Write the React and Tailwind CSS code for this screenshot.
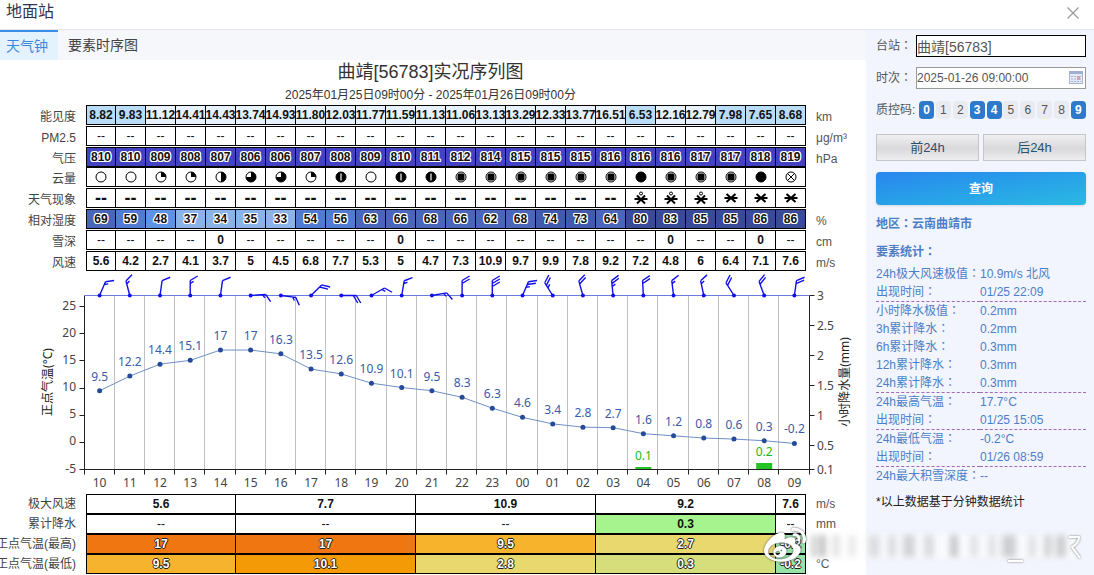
import { useState } from "react";
import clsx from "clsx";
import { FaWeibo } from "react-icons/fa";

const visibility = [
  "8.82", "9.83", "11.12", "14.41", "14.43", "13.74", "14.93", "11.80",
  "12.03", "11.77", "11.59", "11.13", "11.06", "13.13", "13.29", "12.33",
  "13.77", "16.51", "6.53", "12.16", "12.79", "7.98", "7.65", "8.68",
];
const pressure = [
  810, 810, 809, 808, 807, 806, 806, 807, 808, 809, 810, 811, 812, 814, 815,
  815, 815, 816, 816, 816, 817, 817, 818, 819,
];
const cloud = [
  "none", "none", "quarter", "quarter", "half", "three", "three", "quarter",
  "bar", "none", "bar", "bar", "most", "most", "most", "most", "most", "most",
  "full", "most", "most", "most", "full", "cross",
];
const humidity = [
  69, 59, 48, 37, 34, 35, 33, 54, 56, 63, 66, 68, 66, 62, 68, 74, 73, 64, 80,
  83, 85, 85, 86, 86,
];
const wind = [
  5.6, 4.2, 2.7, 4.1, 3.7, 5, 4.5, 6.8, 7.7, 5.3, 5, 4.7, 7.3, 10.9, 9.7, 9.9,
  7.8, 9.2, 7.2, 4.8, 6, 6.4, 7.1, 7.6,
];
const snow = wind.map((_, i) => ([4, 10, 19, 22].includes(i) ? "0" : "--"));
const pm25 = wind.map(() => "--");
const weather = wind.map((_, i) => (i < 18 ? "--" : i < 21 ? "sleet" : "snow"));

const hours = [
  "10", "11", "12", "13", "14", "15", "16", "17", "18", "19", "20", "21", "22",
  "23", "00", "01", "02", "03", "04", "05", "06", "07", "08", "09",
];
const temps = [
  9.5, 12.2, 14.4, 15.1, 17, 17, 16.3, 13.5, 12.6, 10.9, 10.1, 9.5, 8.3, 6.3,
  4.6, 3.4, 2.8, 2.7, 1.6, 1.2, 0.8, 0.6, 0.3, -0.2,
];
// [direction in degrees, full barbs, half barbs]
const barbs = [
  [23, 1, 1], [-15, 1, 1], [8, 1, 0], [0, 1, 1], [8, 1, 0], [86, 1, 1],
  [97, 1, 1], [45, 2, 0], [90, 2, 0], [60, 1, 1], [10, 1, 1], [80, 1, 1],
  [0, 2, 0], [0, 3, 0], [23, 2, 1], [-32, 2, 1], [-16, 2, 0], [-6, 2, 1],
  [-3, 2, 0], [-7, 1, 1], [-12, 1, 1], [-32, 2, 0], [-20, 2, 0], [8, 2, 0],
];

const whiteHalo =
  "[text-shadow:1px_0_#fff,-1px_0_#fff,0_1px_#fff,0_-1px_#fff,1px_1px_#fff,-1px_-1px_#fff,1px_-1px_#fff,-1px_1px_#fff]";
const blackHalo =
  "text-white [text-shadow:1px_0_#222,-1px_0_#222,0_1px_#222,0_-1px_#222]";

const humidityColor = (value) => {
  if (value >= 80) return "bg-[#384a98]";
  if (value >= 70) return "bg-[#405aad]";
  if (value >= 60) return "bg-[#4966ba]";
  if (value >= 50) return "bg-[#517bd0]";
  if (value >= 40) return "bg-[#5d93e4]";
  return "bg-[#8ab3ea]";
};

const CloudIcon = ({ type }) => (
  <svg width="12" height="12" viewBox="0 0 12 12">
    <circle cx="6" cy="6" r="5" fill="#fff" stroke="#000" />
    {type === "quarter" && <path d="M6 6V1a5 5 0 0 1 5 5z" />}
    {type === "half" && <path d="M6 1a5 5 0 0 1 0 10z" />}
    {type === "three" && <path d="M6 6V1a5 5 0 1 1-5 5z" />}
    {type === "bar" && (
      <>
        <circle cx="6" cy="6" r="5" />
        <path d="M6 2.5v7" stroke="#fff" strokeWidth="1.2" />
      </>
    )}
    {type === "most" && <rect x="2.5" y="2.5" width="7" height="7" rx="1.5" />}
    {type === "full" && <circle cx="6" cy="6" r="5" />}
    {type === "cross" && (
      <path d="M2.8 2.8l6.4 6.4M9.2 2.8L2.8 9.2" stroke="#000" />
    )}
  </svg>
);

const WeatherIcon = ({ type }) => {
  if (type === "--") return <span className="text-lg leading-none">--</span>;
  return (
    <svg width="14" height="14" viewBox="0 0 14 14" fill="none" stroke="#000">
      <path
        d={
          type === "sleet"
            ? "M0.5 8h13M3 4.5l8 8M11 4.5l-8 8"
            : "M0.5 7h13M2.5 3l9 8M11.5 3l-9 8"
        }
        strokeWidth="2"
      />
      {type === "sleet" && <circle cx="7" cy="2.5" r="1.5" />}
    </svg>
  );
};

const elementRows = [
  {
    label: "能见度",
    unit: "km",
    values: visibility,
    color: (v) => (v < 10 ? "bg-[#b9dcf8]" : "bg-[#e6f1fb]"),
    text: "font-bold",
  },
  { label: "PM2.5", unit: "μg/m³", values: pm25 },
  {
    label: "气压",
    unit: "hPa",
    values: pressure,
    color: () => "bg-[#4342c2]",
    text: clsx("font-bold", whiteHalo),
    tight: true,
  },
  {
    label: "云量",
    unit: "",
    values: cloud,
    render: (v) => <CloudIcon type={v} />,
  },
  {
    label: "天气现象",
    unit: "",
    values: weather,
    text: "font-bold",
    render: (v) => <WeatherIcon type={v} />,
  },
  {
    label: "相对湿度",
    unit: "%",
    values: humidity,
    color: humidityColor,
    text: clsx("font-bold", whiteHalo),
  },
  {
    label: "雪深",
    unit: "cm",
    values: snow,
    render: (v) => (v === "0" ? <b>{v}</b> : v),
  },
  { label: "风速", unit: "m/s", values: wind, text: "font-bold" },
];

const summaryRows = [
  {
    label: "极大风速",
    unit: "m/s",
    values: ["5.6", "7.7", "10.9", "9.2", "7.6"],
    colors: [],
    text: "",
  },
  {
    label: "累计降水",
    unit: "mm",
    values: ["--", "--", "--", "0.3", "--"],
    colors: ["", "", "", "bg-[#a5f48d]", ""],
    text: "",
  },
  {
    label: "正点气温(最高)",
    unit: "",
    values: ["17", "17", "9.5", "2.7", "-0.2"],
    colors: ["bg-[#f07612]", "bg-[#f07612]", "bg-[#f8b32d]", "bg-[#e8d86e]", "bg-[#96e3a8]"],
    text: blackHalo,
  },
  {
    label: "正点气温(最低)",
    unit: "°C",
    values: ["9.5", "10.1", "2.8", "0.3", "-0.2"],
    colors: ["bg-[#f6b42e]", "bg-[#f39a06]", "bg-[#e8d86e]", "bg-[#d6de7c]", "bg-[#96e3a8]"],
    text: blackHalo,
  },
];
const spans = [5, 6, 6, 6, 1];

const Columns = () => (
  <colgroup>
    <col className="w-[86px]" />
    {hours.map((h) => (
      <col key={h} />
    ))}
    <col className="w-[60px]" />
  </colgroup>
);

const ElementTable = () => (
  <table className="w-full table-fixed border-separate border-spacing-0 text-xs">
    <Columns />
    <tbody>
      {elementRows.map((row) => (
        <tr key={row.label}>
          <th scope="row" className="p-0 pr-[10px] text-right font-normal text-[#444]">
            <div className="flex h-5 items-center justify-end pt-[3px] whitespace-nowrap">
              {row.label}
            </div>
          </th>
          {row.values.map((value, i) => (
            <td key={i} className={clsx("p-0", !row.tight && "pb-px")}>
              <div
                className={clsx(
                  "flex h-5 items-center justify-center border-y border-r border-black text-[#111]",
                  i === 0 && "border-l",
                  row.color && row.color(value),
                  row.text
                )}
              >
                {row.render ? row.render(value) : value}
              </div>
            </td>
          ))}
          <td className="p-0 pl-[10px] text-[#555]">
            <div className="flex h-5 items-center pt-[3px]">{row.unit}</div>
          </td>
        </tr>
      ))}
    </tbody>
  </table>
);

const SummaryTable = () => (
  <table className="w-full table-fixed border-separate border-spacing-0 text-xs">
    <Columns />
    <tbody>
      {summaryRows.map((row) => (
        <tr key={row.label}>
          <th scope="row" className="p-0 pr-[10px] font-normal text-[#444]">
            <div className="flex h-5 items-center justify-end whitespace-nowrap">
              {row.label}
            </div>
          </th>
          {row.values.map((value, i) => (
            <td key={i} colSpan={spans[i]} className="p-0">
              <div
                className={clsx(
                  "flex h-5 items-center justify-center border-y border-r border-black",
                  i === 0 && "border-l",
                  value !== "--" && "font-bold",
                  row.colors[i],
                  row.text || "text-[#111]"
                )}
              >
                {value}
              </div>
            </td>
          ))}
          <td className="p-0 pl-[10px] text-[#555]">{row.unit}</td>
        </tr>
      ))}
    </tbody>
  </table>
);

const LEFT = 84.5;
const RIGHT = 809.5;
const TOP = 23.5;
const BOTTOM = 197.5;
const STEP = (RIGHT - LEFT) / 24;
const centerX = (i) => LEFT + STEP * (i + 0.5);
const tempY = (t) => BOTTOM - (t + 5) * 5.43;
const rainY = (r) => BOTTOM - (r - 0.1) * 60;

const WindBarb = ({ x, angle, full, half }) => {
  const lines = [];
  for (let n = 0; n < full + half; n++) {
    const y = -15 + n * 3;
    const k = n < full ? 1 : 0.45;
    lines.push(`M0 ${y}l${7.5 * k} ${-4.5 * k}`);
  }
  return (
    <g transform={`translate(${x} ${TOP})`}>
      <circle r="2" fill="#1010f0" />
      <path
        d={`M0 0V-15${lines.join("")}`}
        transform={`rotate(${angle})`}
        fill="none"
        stroke="#1010e8"
        strokeWidth="1.4"
      />
    </g>
  );
};

const Chart = () => (
  <svg
    viewBox="0 0 866 222"
    className="block w-full font-['Noto_Sans','Noto_Sans_CJK_SC',sans-serif] text-xs"
    role="img"
  >
    {hours.slice(1).map((h, i) => (
      <path
        key={h}
        d={`M${Math.round(LEFT + STEP * (i + 1)) - 0.5} ${TOP}V${BOTTOM}`}
        stroke="#bfc0c6"
      />
    ))}
    <path d={`M${LEFT} ${TOP}V${BOTTOM}H${RIGHT}V${TOP}`} fill="none" stroke="#222" />
    <path d={`M${LEFT} ${TOP}H${RIGHT}`} stroke="#6c7be0" />
    {[...hours, "end"].map((h, i) => (
      <path
        key={h}
        d={`M${Math.round(LEFT + STEP * i) - 0.5} ${BOTTOM}v5`}
        stroke="#222"
      />
    ))}
    {[-5, 0, 5, 10, 15, 20, 25].map((t) => (
      <g key={t}>
        <path d={`M${LEFT} ${Math.floor(tempY(t)) + 0.5}h-5`} stroke="#222" />
        <text x="76" y={tempY(t) + 3} textAnchor="end" fill="#444">
          {t}
        </text>
      </g>
    ))}
    {[0.1, 0.5, 1, 1.5, 2, 2.5, 3].map((r) => (
      <g key={r}>
        <path d={`M${RIGHT} ${Math.floor(rainY(r)) + 0.5}h5`} stroke="#222" />
        <text x="817" y={rainY(r) + 4} fill="#444">
          {r}
        </text>
      </g>
    ))}
    {hours.map((h, i) => (
      <text key={h} x={centerX(i)} y="215" textAnchor="middle" fill="#444">
        {h}
      </text>
    ))}
    <text transform="translate(52 110) rotate(-90)" textAnchor="middle" fill="#222">
      正点气温(°C)
    </text>
    <text transform="translate(849 110) rotate(-90)" textAnchor="middle" fill="#222">
      小时降水量(mm)
    </text>

    <rect x={centerX(18) - 8} y="195" width="16" height="2" fill="#22c322" />
    <rect x={centerX(22) - 8} y="191" width="16" height="6" fill="#22c322" />
    <g fill="#22b822" textAnchor="middle">
      <text x={centerX(18)} y="188">0.1</text>
      <text x={centerX(22)} y="184">0.2</text>
    </g>

    <polyline
      points={temps.map((t, i) => `${centerX(i)},${tempY(t)}`).join(" ")}
      fill="none"
      stroke="#6f8fc6"
    />
    {temps.map((t, i) => (
      <g key={i} fill="#264a9a">
        <circle cx={centerX(i)} cy={tempY(t)} r="2.5" />
        <text x={centerX(i)} y={tempY(t) - 10} textAnchor="middle" fill="#3a5ba6">
          {t}
        </text>
      </g>
    ))}
    {barbs.map(([angle, full, half], i) => (
      <WindBarb key={i} x={centerX(i)} angle={angle} full={full} half={half} />
    ))}
  </svg>
);

// full-width colon, centred in its box
const Colon = () => (
  <span className="font-['Noto_Sans_CJK_TC',sans-serif] leading-none">：</span>
);

const stats = [
  [
    ["24h极大风速极值", "10.9m/s 北风"],
    ["出现时间", "01/25 22:09"],
  ],
  [
    ["小时降水极值", "0.2mm"],
    ["3h累计降水", "0.2mm"],
    ["6h累计降水", "0.3mm"],
    ["12h累计降水", "0.3mm"],
    ["24h累计降水", "0.3mm"],
  ],
  [
    ["24h最高气温", "17.7°C"],
    ["出现时间", "01/25 15:05"],
  ],
  [
    ["24h最低气温", "-0.2°C"],
    ["出现时间", "01/26 08:59"],
  ],
  [["24h最大积雪深度", "--"]],
];

const CalendarIcon = () => (
  <svg
    width="14"
    height="13"
    viewBox="0 0 14 13"
    className="pointer-events-none absolute top-1 right-[3px]"
  >
    <rect x="0.5" y="0.5" width="13" height="12" fill="#e4e9f6" stroke="#a9b3cc" />
    <path d="M0 0h14v3H0z" fill="#9fb0d6" />
    <path d="M2 5.5h10M2 8h10M2 10.5h10" stroke="#a5b1d2" strokeDasharray="2 1" />
    <path d="M8 5h3v4H8z" fill="#d9a0a5" />
  </svg>
);

const Sidebar = () => {
  const [codes, setCodes] = useState([0, 3, 4, 9]);
  const toggle = (code) => {
    setCodes(
      codes.includes(code) ? codes.filter((c) => c !== code) : [...codes, code]
    );
  };

  return (
    <aside className="w-[228px] shrink-0 bg-[#f2f5fd] pt-[5px] pr-2 pl-[10px] text-xs text-[#4d7fc8]">
      <div className="flex items-center text-[#555]">
        <label htmlFor="station" className="w-10 shrink-0 whitespace-nowrap">
          台站
          <Colon />
        </label>
        <input
          id="station"
          defaultValue="曲靖[56783]"
          className="h-[22px] w-full min-w-0 border border-black bg-white text-sm outline-none"
        />
      </div>
      <div className="mt-[10px] flex items-center text-[#555]">
        <label htmlFor="time" className="w-10 shrink-0 whitespace-nowrap">
          时次
          <Colon />
        </label>
        <div className="relative min-w-0 flex-1">
          <input
            id="time"
            defaultValue="2025-01-26 09:00:00"
            className="block h-[22px] w-full border border-[#999] bg-white text-xs outline-none"
          />
          <CalendarIcon />
        </div>
      </div>
      <div className="mt-3 flex items-center text-[#555]">
        <span className="w-[43px] shrink-0 whitespace-nowrap">质控码:</span>
        <div className="flex flex-1 justify-between">
          {[0, 1, 2, 3, 4, 5, 6, 7, 8, 9].map((code) => (
            <button
              key={code}
              type="button"
              aria-pressed={codes.includes(code)}
              onClick={() => toggle(code)}
              className={clsx(
                "h-[18px] w-[15px] rounded",
                codes.includes(code)
                  ? "bg-[#2f79ca] font-bold text-white"
                  : "bg-[#e9ebf1] text-[#555]"
              )}
            >
              {code}
            </button>
          ))}
        </div>
      </div>
      <div className="mt-[15px] grid grid-cols-2 gap-1 text-[13px] text-[#2b506f]">
        <button
          type="button"
          className="h-[27px] border border-[#c4c6ca] bg-linear-to-b from-[#f0f0f2] from-0% via-[#d9d9db] via-55% to-[#eeeef0]"
        >
          前24h
        </button>
        <button
          type="button"
          className="h-[27px] border border-[#c4c6ca] bg-linear-to-b from-[#f0f0f2] from-0% via-[#d9d9db] via-55% to-[#eeeef0]"
        >
          后24h
        </button>
      </div>
      <button
        type="button"
        className="mt-[11px] block h-[33px] w-full rounded bg-linear-to-br from-[#2a86ee] to-[#2bb9e2] font-bold text-white shadow-sm"
      >
        查询
      </button>
      <p className="mt-[10px] leading-[18px] font-bold">
        地区
        <Colon />
        云南曲靖市
      </p>
      <p className="mt-[10px] leading-[18px] font-bold">
        要素统计
        <Colon />
      </p>
      <table className="mt-1 w-full table-fixed border-separate border-spacing-0 leading-[18px]">
        <colgroup>
          <col className="w-[104px]" />
          <col />
        </colgroup>
        {stats.map((group, i) => (
          <tbody key={i}>
            {group.map(([label, value], j) => {
              const divider =
                i > 0 && j === 0 && "border-t border-dashed border-[#a26bb5]";
              return (
                <tr key={label}>
                  <th
                    scope="row"
                    className={clsx("p-0 text-left font-normal whitespace-nowrap", divider)}
                  >
                    {label}
                    <Colon />
                  </th>
                  <td className={clsx("p-0", divider)}>{value}</td>
                </tr>
              );
            })}
          </tbody>
        ))}
      </table>
      <p className="mt-2 leading-[18px] text-[#222]">*以上数据基于分钟数据统计</p>
    </aside>
  );
};

const smudges = [
  [6, 4, 0.5], [14, 5, 0.6], [26, 8, 0.2], [42, 8, 0.15], [62, 12, 0.22],
  [82, 8, 0.25], [97, 12, 0.3], [118, 10, 0.25], [144, 8, 0.4], [164, 8, 0.2],
  [182, 8, 0.2], [196, 14, 0.35], [222, 8, 0.2], [238, 8, 0.3], [250, 10, 0.35],
];

const Watermark = () => (
  <div className="pointer-events-none absolute right-2 bottom-2 flex items-center">
    <FaWeibo
      size={42}
      className="text-white drop-shadow-[0_0_1px_#555]"
      aria-hidden="true"
    />
    <svg width="280" height="42" viewBox="0 0 280 42" fill="none">
      <defs>
        <filter id="smear" x="-10%" y="-20%" width="120%" height="140%">
          <feGaussianBlur stdDeviation="3 3" />
        </filter>
      </defs>
      <rect x="6" y="9" width="262" height="24" fill="#fff" opacity="0.6" filter="url(#smear)" />
      <g fill="#777" filter="url(#smear)">
        {smudges.map(([x, w, opacity]) => (
          <rect key={x} x={x} y="10" width={w} height="22" opacity={opacity} />
        ))}
      </g>
      <g stroke="#fff" strokeWidth="2" className="drop-shadow-[0_0_1px_#777]">
        <path d="M202 36h15" />
        <path d="M263 12h10q0 6-7 10l8 11" />
      </g>
    </svg>
  </div>
);

const App = () => {
  const [tab, setTab] = useState("clock");

  return (
    <div className="relative flex min-h-screen flex-col overflow-hidden bg-white font-['Liberation_Sans','Noto_Sans_CJK_SC',sans-serif]">
      <header className="flex h-[30px] items-center justify-between border-b border-[#e2e4e8] pr-[14px] pl-[6px]">
        <h1 className="pb-[5px] text-base leading-6 text-[#2f3550]">地面站</h1>
        <button type="button" aria-label="关闭" className="pb-1">
          <svg width="14" height="14" viewBox="0 0 14 14" stroke="#999" strokeWidth="1.2">
            <path d="M1.5 1.5l11 11M12.5 1.5l-11 11" />
          </svg>
        </button>
      </header>
      <div className="flex flex-1">
        <main className="min-w-0 flex-1">
          <nav className="flex h-[30px] bg-[#f5f7fa] text-sm text-[#444]">
            <button
              type="button"
              onClick={() => setTab("clock")}
              className={clsx(
                "w-[58px] pr-1 pl-[6px] text-left whitespace-nowrap",
                tab === "clock" &&
                  "border-t-2 border-[#3a8ee6] bg-[#e3f2fd] text-[#3d88dd]"
              )}
            >
              天气钟
            </button>
            <button
              type="button"
              onClick={() => setTab("series")}
              className={clsx("px-[10px]", tab === "series" && "text-[#3d88dd]")}
            >
              要素时序图
            </button>
          </nav>
          <div className="pr-[5px] text-center text-[#333]">
            <h2 className="text-lg leading-[25px]">曲靖[56783]实况序列图</h2>
            <p className="text-xs leading-5">
              2025年01月25日09时00分 - 2025年01月26日09时00分
            </p>
          </div>
          <ElementTable />
          <Chart />
          <SummaryTable />
        </main>
        <Sidebar />
      </div>
      <Watermark />
    </div>
  );
};

export default App;
